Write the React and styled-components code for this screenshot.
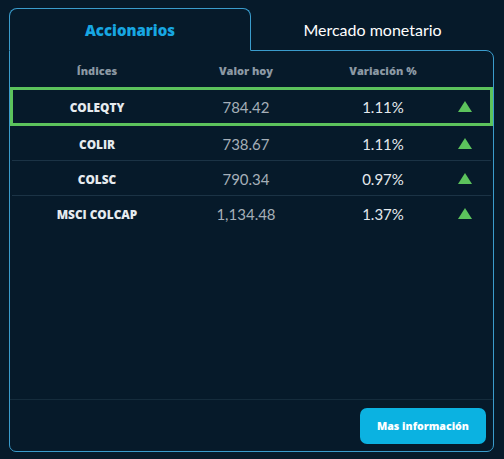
import styled, { createGlobalStyle } from "styled-components";

/* Styling */
const GlobalStyle = createGlobalStyle`
  html, body {
    margin: 0;
    padding: 0;
    background: #061a2a;
  }
  body {
    font-family: "Lato", "Noto Sans", sans-serif;
  }
`;

const Page = styled.div`
  width: 504px;
  height: 459px;
  padding: 8px 11px 0 9px;
  box-sizing: border-box;
  background: #061a2a;
`;

const Panel = styled.div`
  width: 485px;
  display: flex;
  flex-direction: column;
`;

const Tabs = styled.div`
  display: flex;
  height: 42px;
`;

const Tab = styled.div`
  display: flex;
  align-items: center;
  justify-content: center;
  box-sizing: border-box;
  font-size: 16px;
  padding-top: 1px;
  ${(p) =>
    p.$active
      ? `
    width: 242px;
    height: 43px;
    border: 1px solid #3a9ccc;
    border-bottom: 1px solid #061a2a;
    border-radius: 8px 8px 0 0;
    color: #17a7e2;
    font-family: "Open Sans", "Lato", sans-serif;
    font-size: 15px;
    font-weight: 800;
    position: relative;
    z-index: 1;
    background: #061a2a;
  `
      : `
    flex: 1;
    height: 42px;
    color: #ffffff;
    font-weight: 400;
  `}
`;

const Body = styled.div`
  height: 402px;
  box-sizing: border-box;
  border: 1px solid #3a9ccc;
  border-radius: 0 8px 7px 7px;
  display: flex;
  flex-direction: column;
`;

const Row = styled.div`
  display: grid;
  grid-template-columns: 174px 124px 150px 14px;
  align-items: center;
  justify-items: center;
  box-sizing: border-box;
  height: ${(p) => p.$height}px;
  box-shadow: ${(p) => (p.$active ? "inset 0 0 0 3px #5cc35c" : "none")};
  background: ${(p) =>
    p.$line
      ? "linear-gradient(#1b3345, #1b3345) center bottom / calc(100% - 4px) 1px no-repeat"
      : "none"};
`;

const Head = styled.span`
  font-family: "Open Sans", "Lato", sans-serif;
  font-size: 11px;
  font-weight: 800;
  color: #8c99a4;
  padding-top: 3px;
`;

const Name = styled.span`
  font-family: "Open Sans", "Lato", sans-serif;
  font-size: 11.8px;
  font-weight: 800;
  color: #e6ebef;
`;

const Value = styled.span`
  font-size: 15px;
  font-weight: 400;
  color: #a5afb8;
`;

const Change = styled.span`
  font-size: 15px;
  color: #e4e9ed;
`;

const Spacer = styled.div`
  flex: 1;
`;

const Footer = styled.div`
  border-top: 1px solid #152c3c;
  display: flex;
  justify-content: flex-end;
  padding: 8px 7px 7px 0;
`;

const Button = styled.button`
  width: 126px;
  height: 36px;
  border: none;
  border-radius: 7px;
  background: #0bb2e1;
  color: #ffffff;
  font-family: "Open Sans", "Lato", sans-serif;
  font-size: 10.6px;
  font-weight: 800;
  cursor: pointer;
`;
/* Styling End */

const rows = [
  { name: "COLEQTY", value: "784.42", change: "1.11%" },
  { name: "COLIR", value: "738.67", change: "1.11%" },
  { name: "COLSC", value: "790.34", change: "0.97%" },
  { name: "MSCI COLCAP", value: "1,134.48", change: "1.37%" },
];

const Up = () => (
  <svg width="14" height="11" viewBox="0 0 14 11">
    <polygon points="7,0 14,11 0,11" fill="#5cc35c" />
  </svg>
);

const App = () => {
  return (
    <Page>
      <GlobalStyle />
      <Panel>
        <Tabs>
          <Tab $active>Accionarios</Tab>
          <Tab>Mercado monetario</Tab>
        </Tabs>
        <Body>
          <Row $height={36}>
            <Head>Índices</Head>
            <Head>Valor hoy</Head>
            <Head>Variación %</Head>
            <span />
          </Row>
          {rows.map((r, i) => (
            <Row
              key={r.name}
              $active={i === 0}
              $line={i > 0 && i < rows.length - 1}
              $height={i === 0 ? 39 : 35}
            >
              <Name>{r.name}</Name>
              <Value>{r.value}</Value>
              <Change>{r.change}</Change>
              <Up />
            </Row>
          ))}
          <Spacer />
          <Footer>
            <Button>Mas información</Button>
          </Footer>
        </Body>
      </Panel>
    </Page>
  );
};

export default App;
